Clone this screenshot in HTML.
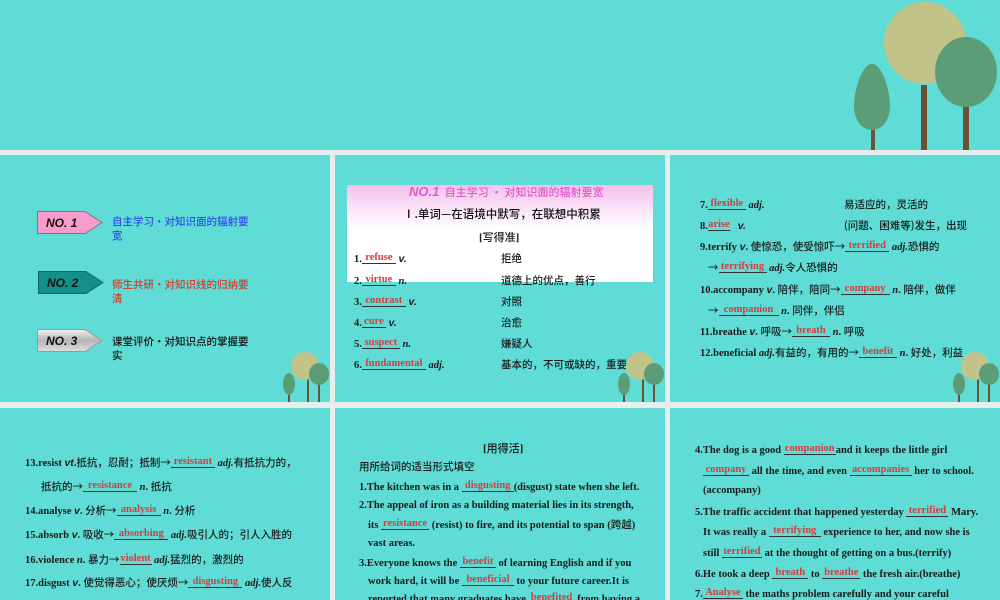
<!DOCTYPE html>
<html><head><meta charset="utf-8"><style>
*{margin:0;padding:0;box-sizing:border-box}
body{width:1000px;height:600px;overflow:hidden;background:#e6eeee;position:relative;font-family:"Liberation Serif","Noto Sans CJK SC",serif;font-weight:bold;font-size:10.5px;color:#1a1a1a}
.s{position:absolute;background:#5fdcd6;overflow:hidden}
.l{position:absolute;white-space:nowrap;line-height:14px}
.b{display:inline-block;border-bottom:1px solid #333;text-align:center;color:#d43b3b;line-height:11px;vertical-align:2px}
i{font-style:italic}
.cn{font-family:"Noto Sans CJK SC",sans-serif;font-weight:500}
.badge{position:absolute;width:66px;height:23px}
.bt{position:absolute;font-family:"Noto Sans CJK SC",sans-serif;font-weight:500;font-size:10.5px;line-height:14px;width:146px}
</style></head><body>
<div class="s" style="left:0;top:0;width:1000px;height:150px">
<svg width="1000" height="150" style="position:absolute;left:0;top:0">
<rect x="921" y="85" width="6" height="65" fill="#6b5236"/>
<circle cx="925" cy="43" r="41" fill="#c2c388"/>
<rect x="963" y="105" width="6" height="45" fill="#6b5236"/>
<ellipse cx="966" cy="72" rx="31" ry="35" fill="#5a9d76"/>
<rect x="871" y="125" width="4" height="25" fill="#6b5236"/>
<path d="M872 64 C862 64 854 90 854 106 C854 120 862 130 872 130 C882 130 890 120 890 106 C890 90 882 64 872 64Z" fill="#5a9d76"/>
</svg></div>

<!-- slide 1 -->
<div class="s" style="left:0;top:155px;width:330px;height:247px">
<svg class="badge" style="left:37px;top:56px" viewBox="0 0 66 23"><path d="M0.5 0.5H48L65 11.5L48 22.5H0.5Z" fill="#f99ccc" stroke="#777"/><text x="9" y="16" font-family="Liberation Sans" font-style="italic" font-weight="bold" font-size="12" fill="#111">NO. 1</text></svg>
<div class="bt" style="left:112px;top:60px;color:#2d4de8">自主学习·对知识面的辐射要宽</div>
<svg class="badge" style="left:38px;top:116px" viewBox="0 0 66 23"><path d="M0.5 0.5H48L65 11.5L48 22.5H0.5Z" fill="#168e8a" stroke="#0c6a66"/><text x="9" y="16" font-family="Liberation Sans" font-style="italic" font-weight="bold" font-size="12" fill="#111">NO. 2</text></svg>
<div class="bt" style="left:112px;top:123px;color:#d63a2a">师生共研·对知识线的归纳要清</div>
<svg class="badge" style="left:37px;top:174px" viewBox="0 0 66 23"><defs><linearGradient id="g" x1="0" y1="0" x2="0" y2="1"><stop offset="0" stop-color="#f0f0f0"/><stop offset=".5" stop-color="#b5b5b5"/><stop offset="1" stop-color="#e0e0e0"/></linearGradient></defs><path d="M0.5 0.5H48L65 11.5L48 22.5H0.5Z" fill="url(#g)" stroke="#999"/><text x="9" y="16" font-family="Liberation Sans" font-style="italic" font-weight="bold" font-size="12" fill="#111">NO. 3</text></svg>
<div class="bt" style="left:112px;top:180px;color:#111">课堂评价·对知识点的掌握要实</div>
<svg width="50" height="50" style="position:absolute;left:282px;top:197px"><rect x="25" y="20" width="2" height="30" fill="#6b5236"/><circle cx="23" cy="14" r="14" fill="#c2c388"/><rect x="36" y="28" width="2" height="22" fill="#6b5236"/><ellipse cx="37" cy="22" rx="10" ry="11" fill="#5a9d76"/><rect x="6" y="35" width="2" height="15" fill="#6b5236"/><ellipse cx="7" cy="32" rx="6" ry="11" fill="#5a9d76"/></svg>
</div>

<!-- slide 2 -->
<div class="s" style="left:335px;top:155px;width:330px;height:247px">
<div style="position:absolute;left:12px;top:30px;width:306px;height:97px;background:linear-gradient(#f5c0ec,#fff 45%,#fff)"></div>
<div class="l" style="left:74px;top:30px;color:#e05ac8;font-size:11px"><i style="font-family:'Liberation Sans';font-size:13px">NO.1</i> <span class="cn">&nbsp;自主学习 · 对知识面的辐射要宽</span></div>
<div class="l cn" style="left:68px;top:52px;font-size:11.5px;color:#111">Ⅰ.单词—在语境中默写，在联想中积累</div>
<div class="l" style="left:144px;top:75px;font-size:11px">[<span class="cn">写得准</span>]</div>
<div class="l" style="left:19px;top:97px">1.<span class="b" style="width:34px">refuse</span> <i style="font-family:'Liberation Sans'">v.</i></div><div class="l cn" style="left:166px;top:97px">拒绝</div>
<div class="l" style="left:19px;top:119px">2.<span class="b" style="width:34px">virtue</span> <i>n.</i></div><div class="l cn" style="left:166px;top:119px">道德上的优点，善行</div>
<div class="l" style="left:19px;top:140px">3.<span class="b" style="width:44px">contrast</span> <i style="font-family:'Liberation Sans'">v.</i></div><div class="l cn" style="left:166px;top:140px">对照</div>
<div class="l" style="left:19px;top:161px">4.<span class="b" style="width:24px">cure</span> <i style="font-family:'Liberation Sans'">v.</i></div><div class="l cn" style="left:166px;top:161px">治愈</div>
<div class="l" style="left:19px;top:182px">5.<span class="b" style="width:38px">suspect</span> <i>n.</i></div><div class="l cn" style="left:166px;top:182px">嫌疑人</div>
<div class="l" style="left:19px;top:203px">6.<span class="b" style="width:64px">fundamental</span> <i>adj.</i></div><div class="l cn" style="left:166px;top:203px">基本的，不可或缺的，重要的</div>
<svg width="50" height="50" style="position:absolute;left:282px;top:197px"><rect x="25" y="20" width="2" height="30" fill="#6b5236"/><circle cx="23" cy="14" r="14" fill="#c2c388"/><rect x="36" y="28" width="2" height="22" fill="#6b5236"/><ellipse cx="37" cy="22" rx="10" ry="11" fill="#5a9d76"/><rect x="6" y="35" width="2" height="15" fill="#6b5236"/><ellipse cx="7" cy="32" rx="6" ry="11" fill="#5a9d76"/></svg>
</div>

<!-- slide 3 -->
<div class="s" style="left:670px;top:155px;width:330px;height:247px">
<div class="l" style="left:30px;top:43px">7.<span class="b" style="width:38px">flexible</span> <i>adj.</i></div><div class="l cn" style="left:174px;top:43px">易适应的，灵活的</div>
<div class="l" style="left:30px;top:64px">8.<span class="b" style="width:22px">arise</span> &nbsp;&nbsp;<i style="font-family:'Liberation Sans'">v.</i></div><div class="l cn" style="left:174px;top:64px">(问题、困难等)发生，出现</div>
<div class="l" style="left:30px;top:85px">9.terrify <i style="font-family:'Liberation Sans'">v</i>. <span class="cn">使惊恐，使受惊吓→</span><span class="b" style="width:44px">terrified</span> <i>adj.</i><span class="cn">恐惧的</span></div>
<div class="l" style="left:38px;top:106px"><span class="cn">→</span><span class="b" style="width:48px">terrifying</span> <i>adj.</i><span class="cn">令人恐惧的</span></div>
<div class="l" style="left:30px;top:128px">10.accompany <i style="font-family:'Liberation Sans'">v</i>. <span class="cn">陪伴，陪同→</span><span class="b" style="width:49px">company</span> <i>n</i>. <span class="cn">陪伴，做伴</span></div>
<div class="l" style="left:38px;top:149px"><span class="cn">→</span><span class="b" style="width:60px">companion</span> <i>n</i>. <span class="cn">同伴，伴侣</span></div>
<div class="l" style="left:30px;top:170px">11.breathe <i style="font-family:'Liberation Sans'">v</i>. <span class="cn">呼吸→</span><span class="b" style="width:38px">breath</span> <i>n</i>. <span class="cn">呼吸</span></div>
<div class="l" style="left:30px;top:191px">12.beneficial <i>adj.</i><span class="cn">有益的，有用的→</span><span class="b" style="width:38px">benefit</span> <i>n</i>. <span class="cn">好处，利益</span></div>
<svg width="50" height="50" style="position:absolute;left:282px;top:197px"><rect x="25" y="20" width="2" height="30" fill="#6b5236"/><circle cx="23" cy="14" r="14" fill="#c2c388"/><rect x="36" y="28" width="2" height="22" fill="#6b5236"/><ellipse cx="37" cy="22" rx="10" ry="11" fill="#5a9d76"/><rect x="6" y="35" width="2" height="15" fill="#6b5236"/><ellipse cx="7" cy="32" rx="6" ry="11" fill="#5a9d76"/></svg>
</div>

<!-- slide 4 -->
<div class="s" style="left:0;top:408px;width:330px;height:192px">
<div class="l" style="left:25px;top:48px">13.resist <i style="font-family:'Liberation Sans'">vt</i>.<span class="cn">抵抗，忍耐；抵制→</span><span class="b" style="width:44px">resistant</span> <i>adj.</i><span class="cn">有抵抗力的，</span></div>
<div class="l" style="left:41px;top:72px"><span class="cn">抵抗的→</span><span class="b" style="width:54px">resistance</span> <i>n</i>. <span class="cn">抵抗</span></div>
<div class="l" style="left:25px;top:96px">14.analyse <i style="font-family:'Liberation Sans'">v</i>. <span class="cn">分析→</span><span class="b" style="width:44px">analysis</span> <i>n</i>. <span class="cn">分析</span></div>
<div class="l" style="left:25px;top:120px">15.absorb <i style="font-family:'Liberation Sans'">v</i>. <span class="cn">吸收→</span><span class="b" style="width:54px">absorbing</span> <i>adj.</i><span class="cn">吸引人的；引人入胜的</span></div>
<div class="l" style="left:25px;top:145px">16.violence <i>n</i>. <span class="cn">暴力→</span><span class="b" style="width:32px">violent</span> <i>adj.</i><span class="cn">猛烈的，激烈的</span></div>
<div class="l" style="left:25px;top:168px">17.disgust <i style="font-family:'Liberation Sans'">v</i>. <span class="cn">使觉得恶心；使厌烦→</span><span class="b" style="width:54px">disgusting</span> <i>adj.</i><span class="cn">使人反</span></div>
</div>

<!-- slide 5 -->
<div class="s" style="left:335px;top:408px;width:330px;height:192px">
<div class="l" style="left:148px;top:33px;font-size:11px">[<span class="cn">用得活</span>]</div>
<div class="l cn" style="left:24px;top:52px">用所给词的适当形式填空</div>
<div class="l" style="left:24px;top:72px">1.The kitchen was in a <span class="b" style="width:52px">disgusting</span>(disgust) state when she left.</div>
<div class="l" style="left:24px;top:91px">2.The appeal of iron as a building material lies in its strength,</div>
<div class="l" style="left:33px;top:110px">its <span class="b" style="width:48px">resistance</span> (resist) to fire, and its potential to span (<span class="cn">跨越</span>)</div>
<div class="l" style="left:33px;top:129px">vast areas.</div>
<div class="l" style="left:24px;top:148px">3.Everyone knows the <span class="b" style="width:36px">benefit</span> of learning English and if you</div>
<div class="l" style="left:33px;top:166px">work hard, it will be <span class="b" style="width:52px">beneficial</span> to your future career.It is</div>
<div class="l" style="left:33px;top:184px">reported that many graduates have <span class="b" style="width:46px">benefited</span> from having a</div>
</div>

<!-- slide 6 -->
<div class="s" style="left:670px;top:408px;width:330px;height:192px">
<div class="l" style="left:25px;top:35px">4.The dog is a good <span class="b" style="width:52px">companion</span>and it keeps the little girl</div>
<div class="l" style="left:33px;top:56px"><span class="b" style="width:46px">company</span> all the time, and even <span class="b" style="width:62px">accompanies</span> her to school.</div>
<div class="l" style="left:33px;top:76px">(accompany)</div>
<div class="l" style="left:25px;top:97px">5.The traffic accident that happened yesterday <span class="b" style="width:42px">terrified</span> Mary.</div>
<div class="l" style="left:33px;top:117px">It was really a <span class="b" style="width:52px">terrifying</span> experience to her, and now she is</div>
<div class="l" style="left:33px;top:138px">still <span class="b" style="width:40px">terrified</span> at the thought of getting on a bus.(terrify)</div>
<div class="l" style="left:25px;top:159px">6.He took a deep <span class="b" style="width:36px">breath</span> to <span class="b" style="width:38px">breathe</span> the fresh air.(breathe)</div>
<div class="l" style="left:25px;top:179px">7.<span class="b" style="width:40px">Analyse</span> the maths problem carefully and your careful</div>
</div>
</body></html>
